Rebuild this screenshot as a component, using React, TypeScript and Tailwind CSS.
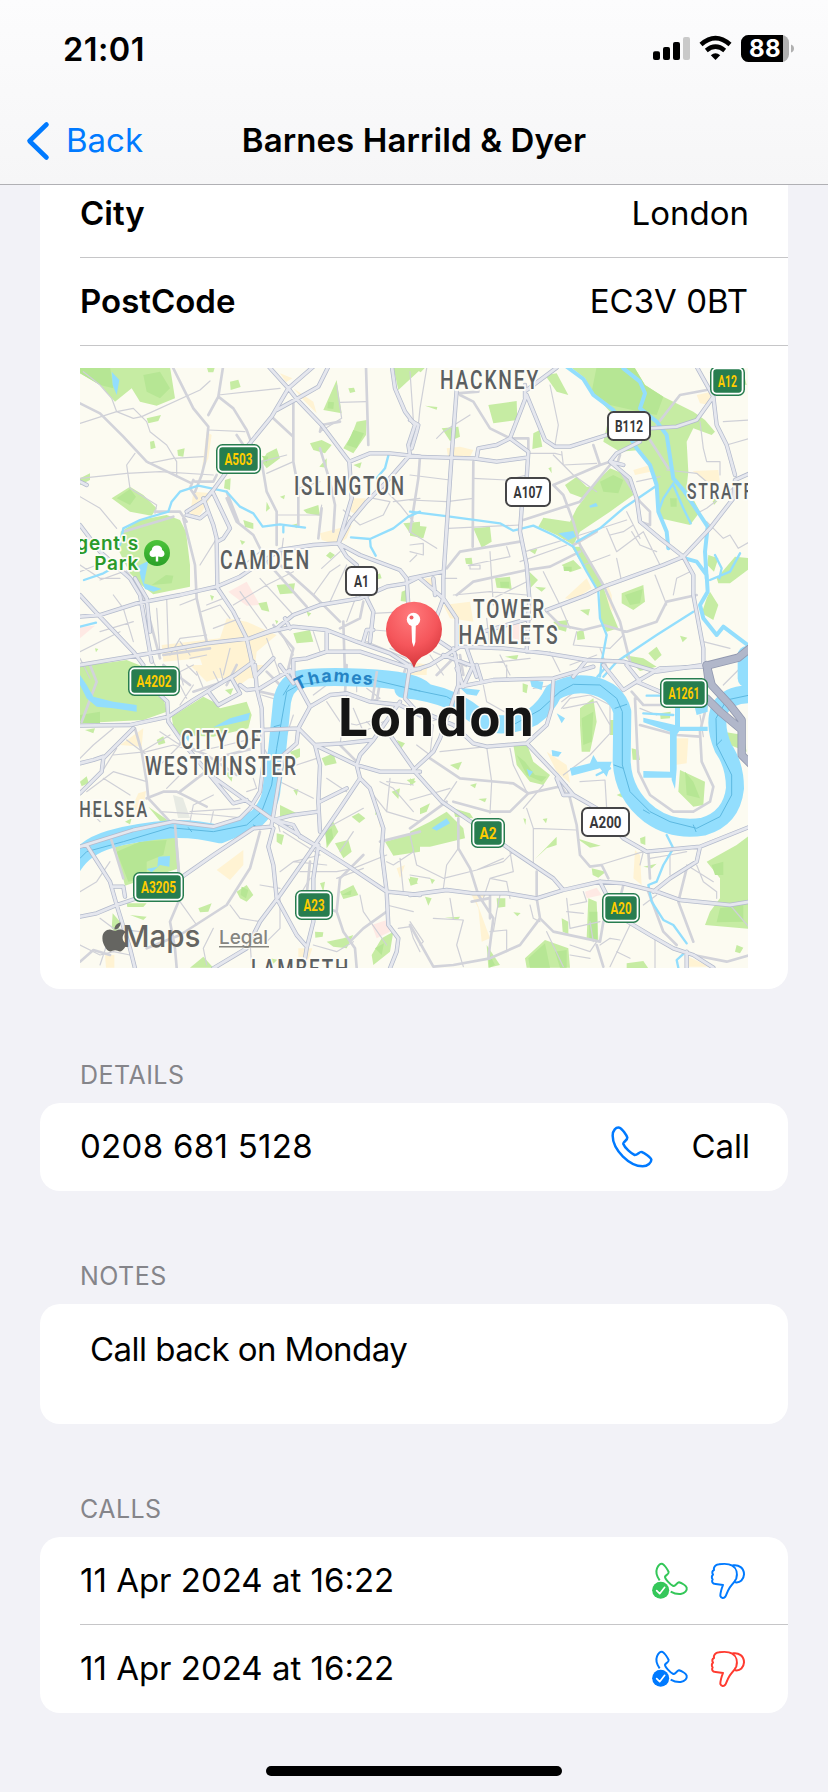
import { FaApple } from "react-icons/fa";

// Map geometry is stored per tile; every tile unit is a third of a pixel.
type Tiles = [string, string, string, string];

const TILE_ORIGINS = [
  "translate(80 365) scale(0.33333)",
  "translate(410 365) scale(0.33333)",
  "translate(80 665) scale(0.33333)",
  "translate(410 665) scale(0.33333)",
];

const builtUp: Tiles = [
  "M380 200L395 210L385 280L365 320ZM340 380L400 385L360 450L330 450ZM720 505L815 480L800 520L770 540L725 525ZM600 25L637 40L618 52ZM640 70L700 110L710 145L670 105ZM440 760L500 770L590 810L530 860L520 940L380 940L360 880L250 890L245 840L420 820ZM815 400L858 400L835 450L812 440Z",
  "M110 250L150 245L190 255L180 275L115 280ZM670 315L720 300L722 320L675 330ZM848 318L925 315L930 355L890 352ZM100 720L180 710L190 770L120 760ZM590 650L605 690L608 740L585 710ZM860 90L905 80L900 120L870 115ZM465 700L530 640L545 670L490 705ZM0 890L60 900L40 930L0 930ZM45 640L75 640L75 670L50 665Z",
  "M410 615L490 555L490 600L450 645ZM120 240L190 190L185 245ZM330 0H560L480 60L440 30L380 50ZM655 850H697L685 885H655ZM75 870H103V908H78ZM175 385L198 378L190 430L150 440ZM890 410L905 460L900 490ZM950 610L975 600L960 640Z",
  "M410 260L470 300L480 355L440 320ZM795 220L835 220L830 295L795 300ZM675 555L690 570L695 660L670 640ZM180 680L230 690L200 710L240 820L215 830L205 730ZM835 875L900 905H835ZM0 5H50V30H0Z",
];

const blush: Tiles = [
  "M445 680L500 650L540 720L500 722ZM0 785L45 782L0 820Z",
  "M310 780L330 775L328 825L308 820Z",
  "M875 780L920 765L930 800L890 820Z",
  "M525 680L560 668L575 690L530 700Z",
];

const park: Tiles = [
  "M0 5H270L285 100L230 122L180 110L155 70L105 110L60 60L0 25ZM450 50L475 44L482 66L452 75ZM770 45L785 145L730 135L750 90ZM830 170L860 165L858 210L820 265L790 250L815 210ZM940 5H1020V15L955 75ZM200 160L243 150L235 168L205 175ZM210 230L222 227L227 248L212 253ZM292 255L314 250L310 275L294 272ZM560 265L590 250L600 280L560 310L545 290ZM690 235L725 225L755 240L735 265L700 255ZM718 305L740 280V308ZM95 400L150 365L190 390L230 430L215 452L150 440ZM122 500L180 465L260 450L300 465L318 500L330 600L330 665L220 688L190 665L150 625L118 560ZM670 435L715 420L720 452L680 445ZM970 475L1020 470V520L990 505ZM490 465L520 475V492L495 486ZM590 660L645 655L640 685L600 688ZM535 715L560 710L568 740L545 735ZM640 805L690 795L700 830L650 835ZM0 905L140 885L190 905L200 945H0ZM380 5H405L400 22H385ZM805 70L822 68L826 80L810 84ZM965 680L978 675V710L962 708ZM750 560L765 570L752 582L738 572ZM390 690L402 694L396 708ZM480 525L496 530L486 540ZM635 480L655 475L650 490ZM0 340L30 325L30 345L0 360ZM600 395L615 390L612 403ZM435 345L452 340L450 375L432 370ZM560 410L570 430L558 440ZM880 635L900 625L905 640L885 645ZM585 765L595 768L590 778ZM680 740L694 745L685 755ZM45 850L55 852L48 862ZM820 300L845 292L840 310Z",
  "M480 5H672L705 60L760 95L850 140L885 165L915 200L905 210L850 190L830 230L835 320L830 365L870 440L840 480L750 460L745 380L725 300L690 255L630 260L580 230L600 140L545 80L525 40ZM405 30L440 25L475 90L440 80ZM235 120L320 108L322 165L250 175ZM600 310L650 330L670 390L600 440L510 500L490 540L440 510L385 485L400 458L480 470L500 430L560 350ZM465 360L500 335L530 365L555 370L520 400L480 385ZM190 490L240 485L245 530L215 548ZM0 480L50 485L40 520L0 512ZM255 640L300 635L305 672L260 668ZM635 685L700 660L705 710L670 735L635 715ZM485 545L515 545L560 620L585 680L600 730L625 790L590 800L570 760L570 680L530 620ZM455 600L490 585L515 610L480 622ZM900 680L925 720L910 765L875 745L890 700ZM920 640L975 575L1020 580V610L960 655L925 655ZM370 205L388 196L397 245L367 252ZM95 190L145 185L150 215L120 228ZM5 5H48L32 22ZM895 570L925 580L912 620L892 600ZM358 620L384 645L362 668ZM640 870L700 880L740 905L690 918ZM500 800L520 795L525 822L502 825ZM715 865L740 845L755 870L735 888ZM45 122L82 126L80 134ZM375 665L408 668L395 680ZM510 735L540 732L535 752ZM430 770L475 765L468 800L440 792ZM810 812L832 818L818 832ZM905 400L925 405L912 420ZM415 310L424 306L425 325ZM355 555L382 552L375 568ZM285 875L325 870L320 885ZM165 580L185 578L188 600L168 596ZM290 342L345 335L340 355ZM965 10L1000 20L1010 60L975 55Z",
  "M0 -5H150L155 85L250 95L260 140L190 165L0 175ZM275 155L370 95L400 110L420 130L500 110L515 150L505 190L400 215L300 210L280 185ZM105 545L285 510L298 610L170 650L135 662ZM600 420L650 445L600 458ZM725 280L760 265L770 295L735 302ZM735 490L760 470L775 500L740 550ZM765 535L805 525L815 560L790 580ZM915 530L1020 500V560L940 572ZM470 680L500 660L520 690L500 710L480 700ZM780 680L820 660L835 690L790 702ZM330 908L370 875L400 908ZM590 505L612 510L605 540L590 530ZM875 870L905 820L940 800L930 860L880 900ZM205 425L270 470L240 468ZM230 225L250 214L256 234L236 240ZM740 830L790 820L820 810L800 850L760 845ZM98 745L120 770L115 810L95 790ZM140 715H200L190 726H142ZM630 260L660 250V275L640 285ZM935 380L960 370L955 402ZM0 350L20 334L26 354L5 364ZM815 455L836 444L856 460L838 474ZM950 225L975 235L964 250ZM985 640L1015 655L992 662ZM355 730L395 715L385 740L360 742ZM570 880L592 884L580 896ZM705 800L730 802L728 815L706 818ZM720 655L735 650L730 680ZM15 195L45 190L40 205ZM435 75L460 70L452 90ZM980 345L1005 340L998 360ZM135 470L155 460L150 478ZM640 375L655 372L650 392ZM435 325L460 318L455 350ZM150 750L200 755L190 765ZM890 430L895 445L885 450Z",
  "M310 240L350 235L370 290L420 330L400 360L360 350L320 300ZM510 130L550 100L560 170L540 260L515 260L510 180ZM0 500L60 470L110 440L160 490L165 520L60 545H0ZM810 315L885 350L880 420L850 425L805 380ZM890 590L980 540L1020 510V792L885 780L900 740L930 700V640ZM345 880L405 825L475 850L480 908H350ZM535 700L560 710L565 830L530 820ZM230 840L270 900L235 908ZM650 895L700 888L715 910H650ZM375 582L440 515V540L410 550ZM120 300L156 290L145 315ZM665 250L685 255L690 285L668 284ZM690 520L706 514V540L692 535ZM545 610L588 620L565 638L548 630ZM260 700H286V725L262 728ZM620 390L642 380L638 398ZM500 520L572 542L540 548ZM130 430L180 445L190 460L135 455ZM30 430L60 415L50 440L30 448ZM338 55L354 60L350 85L338 80ZM340 460L348 462L346 480ZM398 462L412 460L408 475ZM205 402L230 400L225 412ZM0 340L18 350L0 362ZM0 635L25 640L20 655L0 655ZM45 695L65 700L55 722ZM105 758L150 755L145 763ZM310 742L332 744L322 754ZM980 840L1000 848L990 865L975 860ZM700 605L740 596L725 610ZM750 145L782 140L780 160L752 162ZM60 640L75 645L66 658ZM455 760L475 770V808L458 800ZM940 200L1000 210L1010 260L960 240ZM600 165H620V210H600ZM180 360L200 355L195 370Z",
];

const parkDeep: Tiles = [
  "M0 5H90L100 70L60 60L0 25ZM190 30L240 20L270 70L240 100L200 80ZM110 400L150 372L168 395L150 420ZM820 195L852 205L830 250L800 240ZM745 110L762 112L760 132L742 130ZM258 630L280 632L275 655L215 660ZM545 272L565 275L560 295Z",
  "M560 5H672L705 60L760 95L740 150L690 140L600 120L545 80ZM570 350L610 330L640 345L625 385L580 380ZM645 690L698 672L690 715L660 720ZM270 650H298V668H272ZM780 400L800 400V425H782ZM460 605H485V618H462Z",
  "M110 560L180 530L260 525L250 570L200 590L200 640L145 650ZM735 500L755 490L760 520L742 540ZM485 665L505 675L498 700L482 690ZM0 150L60 140L60 175H0ZM785 690L815 675L812 690ZM885 850L912 835L905 870Z",
  "M320 270L345 290L375 330L410 335L395 350L350 330ZM515 160L550 140L545 230L520 240ZM825 320L850 350L870 400L830 390ZM355 880L405 835L420 908H360ZM435 860L470 855V908H450ZM538 740H562V825H538ZM235 860L255 900L238 908ZM905 600L940 590L940 630L915 630ZM930 730L1000 720V770L920 772Z",
];

const lake: Tiles = [
  "M95 20L118 45L110 90L98 60ZM175 602L205 588L192 655L245 672L220 680L195 672L183 640Z",
  "M445 505L490 498L497 515L475 526ZM538 422L558 413L564 424L540 428Z",
  "M0 30L20 60L40 95L100 110L170 120V140L100 130L50 125L20 100L0 60ZM400 187L450 160L510 143L505 165L440 180ZM200 612L232 605L235 575L270 573L268 605L240 600L215 622ZM315 215L330 210L325 230Z",
  "M480 310L540 295L550 270L562 290L605 290L590 335L570 310L485 332ZM795 125H810V185H893V198H808L800 210V312L795 372L785 345V338H700V318L780 320V200L700 172V158L795 180ZM425 255L455 262L445 275L427 273ZM350 312L369 320L358 335ZM65 490L110 460L120 475L80 497ZM360 45L400 50L395 75L365 65ZM150 68L210 75L200 92L170 88ZM855 130L893 100V140L860 150ZM440 145L465 160L455 175ZM985 0H1020V25L1000 20Z",
];

const stream: Tiles = [
  "M120 540L130 490L180 465L265 440L275 410L300 380L355 362L440 380L480 425L520 445L548 485L600 478L675 488M610 480V502M813 517L870 522L940 490L985 455L1020 440M870 522L872 545L887 572M925 272L915 310L890 340M12 645L70 625L115 600M0 785L48 773",
  "M0 440L120 455L270 475L310 497L370 482L430 510L490 545L530 620L565 680L570 760L590 810L575 890L570 935M850 740L740 810L620 890L580 935M500 530L570 490L640 430L735 365M790 355L760 400L745 440M790 360L820 430L842 475M900 645L960 620L990 565M915 570L935 610L928 640",
  "M0 0",
  "M770 510L790 550L760 600L740 650L715 660L725 710L760 765L790 780L830 835M822 865L800 885L805 908M585 10L562 35M710 92H760M700 145L790 150M600 310L560 330",
];

const river: Tiles = [
  "M0 0",
  "M470 5L520 42L550 90L610 135L680 250L720 300L740 360L745 440L770 500L775 550M640 10L690 50L705 85L690 130L740 170L770 210L790 340L820 375L870 450L893 485L885 560L890 640M825 580L860 590L890 630L893 680L870 720L880 760L920 810L940 785L1020 845",
  "M0 0",
  "M0 0",
];

const thames: Tiles = [
  "M0 0",
  "M1010 870V940",
  "M-20 600Q15 545 90 523T280 492Q350 490 420 508Q490 480 530 460Q572 420 575 370L592 250L606 110Q615 60 650 45Q700 32 850 38T1030 75",
  "M-20 72Q60 80 120 105T220 172Q300 190 370 155Q410 125 430 82Q480 50 540 60Q620 75 637 140L635 290Q640 390 720 450Q790 500 880 485Q965 460 975 370Q975 300 940 250Q910 180 930 130Q955 85 1030 88",
];

const thamesLine: Tiles = [
  "M0 0",
  "M0 0",
  "M0 580L20 560L130 530L270 488L400 500L500 480L545 440L575 360L590 250L620 80L660 58L760 48M860 40L1020 78M335 500L325 488M520 480L540 490M610 90L628 60M582 185L600 180",
  "M0 72L110 95L160 125M300 185L390 135L450 80L490 58L570 60L620 100L637 140V300L660 380L720 440L780 470L860 490L930 455L965 390L965 330L920 240L918 160L950 105L1020 90M615 130L650 118M612 300L640 310M700 435L718 445M850 480L858 500M920 240L935 225",
];

const minor: Tiles = [
  "M0 175L110 140L160 160L185 155L360 75L390 48M10 20L60 60L95 100L110 140L160 130L200 170L210 200L260 240L290 290V335M415 90L600 70M385 195L495 200M780 112L858 110M770 60L785 160L720 200M0 340L140 325L240 320L400 330M205 295L280 280L370 275M165 265L140 300L150 370L230 420L225 445M0 395L60 430L110 490M560 325L640 290M545 290L620 270M590 450H720L725 420M655 370L720 350M790 435L840 480L910 450L930 410L880 400M600 600L610 520M725 610L780 560M700 690L750 620L780 600M800 600L750 710M900 360L960 420L1000 470M260 700L265 850M100 690L130 730L160 830M60 800L160 770M0 860L120 800M480 680L560 790M540 640L640 750M460 720L560 660L640 620M230 730L240 870M300 830L330 870M270 870L300 820L380 810M380 720L430 700M365 740L420 720L450 760M400 790L480 760M540 560L490 600M60 645L130 620M0 600L60 640L120 640M830 690L800 770M930 850L1000 880M860 830L980 880M880 840L1000 900M330 880L380 870M450 850L430 930M560 820L600 930M600 800L640 870M700 800L720 860M880 795L920 798M880 745L980 740M410 520L360 600M30 940L0 880M210 870L240 930M290 850L300 930M940 410L1020 400M0 620L50 600M350 700L300 720",
  "M0 330L120 345M0 405L110 410L190 400M190 340L290 345L350 330M115 490L330 480M50 10L30 130L25 180M420 60L445 180L435 240M345 560L510 510L650 465M455 260L460 300L490 330M460 300L560 295M590 490L620 560L700 500L750 600M650 440L690 520M620 580L635 650M770 315L860 325L890 350M870 170L880 250L890 290H930V330M735 630L770 720M790 690L800 640L840 620M400 620L450 720L480 790M680 350L750 335M890 470L940 520L960 510L985 550L1020 530M240 560L250 720M290 545L300 575L180 600M0 540L40 535V570L0 560M140 640H100M130 690L240 680L350 690M500 800L490 840L600 850L640 810M80 220L100 200L180 150M570 850L600 930M20 570L0 590M175 602L210 600V612H180V602M330 590L470 540M250 700L350 650M0 20L10 165M360 265L435 265L455 270M430 270L490 330L560 380M0 500L80 550M940 170L1020 165M950 240L1020 220M230 760L240 850M270 870L300 930M180 900L360 880M60 870L100 930M480 900L560 870M600 510L640 500L670 480M665 500L690 540L740 560M870 440L890 430L980 360M70 860L170 905M0 770L60 780M520 600L600 570M420 860L450 920M880 830L960 850",
  "M0 280L40 240L100 190M0 410L60 470M20 380L100 320L200 350M100 270L200 260M140 225L240 300L300 240L240 200M70 340L150 390M110 250L60 330M200 260L280 240L350 260L440 240L520 220M185 260L270 210M330 440L480 430M390 485L400 440M330 470L340 420L400 390M300 330L260 370M520 340L530 370L500 380M540 660L600 670M450 720L480 760L540 770M600 350L700 400M610 500L720 570M720 570L640 590L600 620M640 590L740 600M660 620L770 620L820 610L920 570M840 690L850 740L920 840M770 640L850 610M920 720L1000 740M955 790L990 785L1000 820L1020 860M820 500L780 560M740 490L850 430M880 390L920 440L1020 470M900 350L940 370L1000 440M920 440L930 340M740 340L800 380M650 300L710 280M700 840L770 860L820 830M400 790L370 850L380 900M510 830L515 900M300 710L350 780M60 760L100 790L180 800M80 840L60 900M0 680L50 650L90 590M0 840L60 870L100 860L150 870M240 440L400 450L500 460M530 210L580 300M545 90L610 110M740 110L780 170L830 180L900 160M800 90L780 240M640 150L610 240M860 170L900 210M820 130L850 200L950 150M700 90L740 60M310 60L300 20L340 0M300 120L340 60M320 100L300 60M350 20L370 70M400 20L420 60M420 10L430 50M320 0L350 30M960 580L970 680M1000 560L940 600L920 590M560 830L600 790L600 700M830 20L830 80M860 70L900 100L860 110M600 500L590 460M690 640L660 690M920 350L1000 360",
  "M90 260L230 245L245 350L240 445M455 130L480 100L540 90L600 120V205L540 270L460 330M350 430L370 490V600M370 490L500 495M300 560L310 620L240 640L220 700M510 350L585 345L590 430M0 510L20 600L100 640L200 615L280 580M570 600L700 560M240 800L290 795V860M470 700L480 790L570 770M470 740L520 745M70 760L160 765L140 840L160 905M735 820V908M660 780L600 905M860 600L880 650L920 680V700M960 720L1020 790M410 800L460 905M480 840L540 860L560 830M140 350L100 410M0 405L120 370M300 250L310 300L350 380M400 360L340 430M60 640L0 630M145 550L110 600L100 670M200 615L280 590L310 560M270 690L260 740L250 800M360 720L370 760L390 770M700 720L740 690M720 580L780 570L830 560M780 570V630M830 600L910 650M480 720L530 710L520 680M540 770L550 830M600 690L640 760M0 770L40 830L30 840M570 840L600 820L630 825M480 870L540 880M120 700L130 760M455 110L520 60M460 130L560 110L600 180M220 60L230 110L300 150M290 0L290 45M370 70L430 60M0 120L60 160M0 140L70 180M20 240L60 270L70 180M120 150L60 170M690 130L740 150M870 150L880 215M620 860L660 880M700 560L690 600M300 700L290 650L240 640M940 60L1000 0",
];

const secondary: Tiles = [
  "M275 0L340 130L385 185L375 290L365 330L345 380M430 0L415 95L385 150M415 95L460 130L500 195L515 235M0 115L60 145L130 215L200 290L335 355M858 5L865 240M640 115V290L655 370V485M575 155L640 215M720 250L750 350L765 420L760 500M545 290L560 380L590 440V540M725 430L715 520M470 210L490 240M310 460L345 600L350 700L380 830M225 440H300L320 470M440 400L470 470L520 510L560 590L680 725M600 600L700 690L780 770M790 770L795 935M440 380L475 470M580 780L640 850L620 930M345 350L400 350L410 330M130 500L280 455M340 345L330 370L350 400M720 200L725 180L780 170M780 790L840 760L850 710M250 870L390 850M140 620L190 690L240 880",
  "M150 90L190 110L240 190L300 220H355V260M190 290L188 545M30 275L25 340L0 500M205 60V80L140 85M600 300L510 410L340 465M430 360L500 330L570 300L600 290M550 240L570 300M430 360L460 390L490 470L510 540L580 660L630 770L660 890M110 610L150 560L330 530M140 690L190 650L350 615L420 605L510 560M410 740L450 780L520 795L580 780L650 800L740 770L770 710L860 690M740 180L810 90L890 75M720 225L775 310M630 270L620 300L690 410M690 470L720 480L720 440L690 410M150 870L160 930M120 850L140 870L80 930M490 540L560 500",
  "M165 190L185 260L200 350L205 400L270 470M200 400L250 380H290L380 425M285 480L295 610L300 700L270 770L285 850L290 908M540 500L510 610L440 720L300 810L200 850M90 510L130 640M905 20L890 110M800 0L795 85M780 240L830 290M770 740L790 800L825 850L830 908M0 890L40 855L90 870M920 740L850 790L810 830M300 380L390 310L440 270L520 250M30 0L50 50L5 170M470 0L440 60M340 80L430 50M300 235L380 270L470 330M250 0L330 60M560 20L600 60M980 0L960 60M540 80L585 90L590 130M900 530L1020 500M690 590L680 690M770 740L720 720M850 570L780 640L770 740",
  "M675 100L685 320L720 390L790 440H850L900 410L910 365L875 290L870 200L890 120L700 120L665 80M60 280L150 340L310 355L355 385L300 440H240L130 410M355 385L470 360L500 480L510 570L540 605L575 600L595 640M145 460V550L180 610L205 690L250 760L235 880M380 620V700L390 760L430 800L570 830L580 770M715 680L760 800L800 840M830 610L805 710L850 830M715 560L720 640M560 840L580 905M0 780L70 905L130 900L240 880L330 840L390 760M850 870L950 890L1020 870M690 180L800 210L870 215M110 410L0 490M630 700L640 660M185 710L235 700M240 690L240 760M470 390L440 340",
];

const major: Tiles = [
  "M562 0L625 70L650 102L725 180L808 290L815 400L775 535M700 5L625 70L575 155L440 320L400 375L375 405L320 440M745 5L715 65L650 102L590 135M808 290L870 265H930L1020 275M935 0L945 70L975 140L1005 180L985 240L990 270L920 350L860 410L810 470L775 535M775 535L700 540L600 555L480 635L410 665L300 690L170 715L60 750L0 755M775 535L840 570L960 615L980 640L985 720M980 655L1020 635M980 655L920 665L840 700L720 720L640 750L590 790L510 820L380 835L180 870L0 900M320 450L360 460L385 440L400 480L410 520L412 665M370 400L385 440M400 385L450 490L430 520L412 530M0 480L60 560L150 640L180 690L215 890M0 690L60 755L160 860L190 900M410 665L460 740L500 820L525 935M510 820L570 800L640 785L740 795L830 830L930 865L1000 910M775 535L800 575L830 600M860 700L880 740L870 830M525 935L580 880M640 940V885L680 880L740 860H840L1000 912L1020 912M740 795V860M165 640L200 700L210 800M850 830L860 795L880 795M0 350L20 360M615 760L630 790",
  "M140 75L125 270L110 490L100 640V700M350 90L335 130L300 220M350 90L405 225L435 245H480L590 210M345 60V100M350 75L440 8M0 275L190 280L260 290L350 278M200 280L205 250L260 240L300 220L355 260L350 340L335 430L330 500L350 600L358 700L350 860M0 165L25 180L20 200L5 250M720 190L800 185L860 165L910 95M860 5L910 95L920 180L950 240L975 330M690 230L620 265L600 290L660 340L680 400L690 470L750 520L820 575M1020 325L975 345L970 400L900 490L820 575L760 600L580 665L530 690L410 735M820 575L850 630V690L880 850V900L740 920L640 890L530 885L410 865L280 850L150 845L60 900L0 920M0 640L100 620M30 640L100 700L140 760V850M70 640L75 690M100 700L60 810L120 850M170 850L200 935M130 850L150 935M220 800L360 760M600 290L640 300M490 935L530 885M100 870L180 900",
  "M0 182L150 180L265 155L340 105L430 50L465 30L520 -10M265 170L262 110L240 90M265 170L310 235L390 330L510 415L580 465L640 500L705 540M385 80L415 120L480 85L455 40M525 0L530 70L545 130L550 300L540 380L510 430L480 460L400 485L280 470L160 495L0 545M0 385L65 320L70 280L160 190M0 295L40 285L70 275M480 60L500 75L540 70L630 15L690 125L655 190L550 195M655 190L705 240L720 300L715 410L720 500M655 190L650 235L610 270L600 330L575 480M690 125L750 90L800 85L870 110L960 120L1020 150M705 240L790 235L880 225L960 110M705 240L830 300L900 320H1020M880 225L840 270L830 300L840 340L780 430L705 540L600 690L540 770L500 850L400 910M840 340L870 370L910 490L905 560L920 680L925 780L955 820L950 860L930 910M705 540L800 600L920 680L1020 690M720 410L800 370M715 440L640 450L580 465M575 485L520 490L400 570L300 640L200 690L110 720L50 745L0 755M20 540L90 650L110 720L150 850L165 910M580 490L565 545L580 600L590 700L650 810L680 845M715 540L700 640V770L680 850L670 910M100 665H130L135 695M990 0L975 100L1020 150M930 210L1000 310M580 465L640 480L660 515L705 540M385 325L460 415L500 405M640 55L600 0",
  "M145 5V60L90 220L70 260L10 315L95 410L190 475L310 560L430 640L460 675L380 700L290 685H190L110 675L0 690M460 675L570 650L640 655L740 680L810 705L960 720L1020 710M150 65L250 45L430 40L550 5M430 45L425 130L410 180L350 235L230 245L190 235L130 180L60 150L0 130M350 235L440 330L490 390L560 430L640 520L710 560L870 545L1020 485M870 545L860 590L780 640L730 680M440 340L460 390H490M570 650L620 750L720 810L790 850L850 870L910 908M830 860V908M580 0L640 75L680 50L750 10L880 5M680 50L750 80M650 0L690 50M200 0L215 50M140 10L160 65L190 0",
];

const motorway: Tiles = [
  "M0 0",
  "M1020 850L985 878L890 902L895 940",
  "M0 0",
  "M890 0L905 60L960 120L995 165V270L1025 300M890 100L930 140L990 190",
];

function Layer({ tiles, ...rest }: { tiles: Tiles } & React.SVGProps<SVGGElement>) {
  return (
    <g {...rest}>
      {tiles.map((d, i) => (
        <path key={i} d={d} transform={TILE_ORIGINS[i]} />
      ))}
    </g>
  );
}

const line = { fill: "none", strokeLinejoin: "round", strokeLinecap: "round" } as const;

type PlaceProps = { x: number; y: number; w: number; size?: number; children: string };

function Place({ x, y, w, size = 25, children }: PlaceProps) {
  return (
    <text
      x={x}
      y={y}
      textLength={w}
      lengthAdjust="spacingAndGlyphs"
      fontSize={size}
      letterSpacing={2.4}
      fill="#5b5f61"
      stroke="#fdfcf6"
      strokeWidth={4}
      strokeLinejoin="round"
      paintOrder="stroke"
      className="font-['Roboto',sans-serif] font-medium"
    >
      {children}
    </text>
  );
}

type ShieldProps = { cx: number; cy: number; w: number; tw: number; label: string; green?: boolean };

function Shield({ cx, cy, w, tw, label, green }: ShieldProps) {
  return (
    <g>
      {green ? (
        <>
          <rect x={cx - w / 2} y={cy - 15} width={w} height={30} rx={6.5} fill="#277d4f" />
          <rect x={cx - w / 2 + 2.4} y={cy - 12.6} width={w - 4.8} height={25.2} rx={4} fill="none" stroke="#fff" strokeWidth={1.8} />
        </>
      ) : (
        <rect x={cx - w / 2 + 1} y={cy - 14} width={w - 2} height={28} rx={5.5} fill="#fff" stroke="#454547" strokeWidth={2} />
      )}
      <text
        x={cx - tw / 2}
        y={cy + 5.7}
        textLength={tw}
        lengthAdjust="spacingAndGlyphs"
        fontSize={16}
        fill={green ? "#ffcc00" : "#38383a"}
        className="font-['Roboto',sans-serif] font-bold"
      >
        {label}
      </text>
    </g>
  );
}

function CityMap() {
  return (
    <svg viewBox="80 368 668 600" className="h-[600px] w-[668px] overflow-hidden">
      <defs>
        <radialGradient id="pin" cx="0.45" cy="0.2" r="0.85">
          <stop offset="0" stopColor="#ff7a7c" />
          <stop offset="0.55" stopColor="#f5565b" />
          <stop offset="1" stopColor="#cf3136" />
        </radialGradient>
        <linearGradient id="tree" x1="0" y1="0" x2="0" y2="1">
          <stop offset="0" stopColor="#4cc43a" />
          <stop offset="1" stopColor="#2ba028" />
        </linearGradient>
        <path id="bend" d="M298 691Q318 679 345 682.5T375 684" />
      </defs>
      <rect x="80" y="368" width="668" height="600" fill="#fcfbf1" />
      <Layer tiles={builtUp} fill="#fff3d3" />
      <Layer tiles={blush} fill="#fee9e4" />
      <Layer tiles={park} fill="#c6eca3" />
      <Layer tiles={parkDeep} fill="#b6e694" />
      <path d="M173 795L183 798L190 818H178Z" fill="#e7eae3" />
      <Layer tiles={minor} {...line} stroke="#cfd0d7" strokeWidth={3.6} />
      <Layer tiles={secondary} {...line} stroke="#d2d3da" strokeWidth={8} />
      <Layer tiles={stream} {...line} stroke="#93defd" strokeWidth={7} />
      <Layer tiles={river} {...line} stroke="#93defd" strokeWidth={12} />
      <Layer tiles={lake} fill="#93defd" />
      <Layer tiles={thames} {...line} stroke="#93defd" strokeWidth={54} />
      <Layer tiles={thamesLine} {...line} stroke="#5cb8e0" strokeWidth={3} />
      <path d="M175 824.5L179 872M110 836L115 851M377 671L372 702M459 680L458 708" fill="none" stroke="#d2d3da" strokeWidth={2.6} />
      <Layer tiles={major} {...line} stroke="#b3bacc" strokeWidth={13} />
      <Layer tiles={major} {...line} stroke="#e5e7ee" strokeWidth={8.5} />
      <Layer tiles={motorway} {...line} stroke="#9299b0" strokeWidth={25} />
      <Layer tiles={motorway} {...line} stroke="#b1b7ca" strokeWidth={20} />

      <Place x={440} y={389} w={100}>HACKNEY</Place>
      <Place x={294} y={494.5} w={112}>ISLINGTON</Place>
      <Place x={220} y={569} w={91}>CAMDEN</Place>
      <Place x={473} y={618} w={73}>TOWER</Place>
      <Place x={458.5} y={644} w={101}>HAMLETS</Place>
      <Place x={181} y={748.5} w={82}>CITY OF</Place>
      <Place x={145} y={775} w={153}>WESTMINSTER</Place>
      <Place x={687} y={499} w={103} size={22}>STRATFORD</Place>
      <Place x={67} y={817} w={82} size={22}>CHELSEA</Place>
      <Place x={251} y={978} w={99}>LAMBETH</Place>

      <g fill="#2a9a2a" stroke="#fdfcf6" strokeWidth={3.5} paintOrder="stroke" strokeLinejoin="round" fontSize={19} letterSpacing={0.8} textAnchor="end" className="font-['Inter',sans-serif] font-semibold">
        <text x={139} y={549.5}>Regent's</text>
        <text x={139} y={570}>Park</text>
      </g>
      <circle cx={157} cy={553} r={13} fill="url(#tree)" />
      <path d="M155.800 561.500V556.500Q149.500 558 149.500 553.500Q149.500 551 151.800 550Q152 545.500 157 545.500Q162 545.500 162.200 550Q164.500 551 164.500 553.500Q164.500 558 158.200 556.500V561.500Z" fill="#fff" />

      <text fontSize={17.500} letterSpacing={1.400} fill="#2583c4" className="font-['Inter',sans-serif] font-bold">
        <textPath href="#bend">Thames</textPath>
      </text>

      <Shield green cx={238.500} cy={459} w={45} tw={28} label="A503" />
      <Shield green cx={154} cy={681} w={52} tw={35} label="A4202" />
      <Shield green cx={158.500} cy={887} w={51} tw={35} label="A3205" />
      <Shield green cx={314} cy={905} w={38} tw={21} label="A23" />
      <Shield green cx={727.500} cy={381} w={35} tw={19} label="A12" />
      <Shield green cx={488} cy={833} w={34} tw={17} label="A2" />
      <Shield green cx={621} cy={908} w={38} tw={21} label="A20" />
      <Shield green cx={684} cy={693} w={48} tw={31} label="A1261" />
      <Shield cx={361.500} cy={581} w={33} tw={15} label="A1" />
      <Shield cx={528} cy={492} w={46} tw={29} label="A107" />
      <Shield cx={629} cy={426} w={44} tw={28} label="B112" />
      <Shield cx={605.500} cy={822} w={49} tw={32} label="A200" />

      <text
        x={338}
        y={736}
        textLength={198}
        lengthAdjust="spacingAndGlyphs"
        fontSize={53}
        letterSpacing={2.500}
        fill="#151515"
        stroke="#fdfcf6"
        strokeWidth={3}
        strokeLinejoin="round"
        paintOrder="stroke"
        className="font-['Roboto',sans-serif] font-bold"
      >
        London
      </text>

      <path d="M414 668Q411 658 401 654.500A28 28 0 1 1 427 654.500Q417 658 414 668Z" fill="url(#pin)" />
      <circle cx={413.500} cy={619.500} r={6.700} fill="#fff" />
      <circle cx={411.500} cy={617.500} r={2} fill="#f25e62" />
      <path d="M411.500 625H415.800L415.400 642L413.800 647L412 642Z" fill="#fff" />

      <FaApple x={98} y={920.500} width={25} height={25} color="#656561" />
      <g fill="#656561" className="font-['Inter',sans-serif]">
        <text x={122.500} y={947} fontSize={30.500} textLength={78} lengthAdjust="spacingAndGlyphs" className="font-medium">Maps</text>
        <text x={219} y={944} fontSize={18.500} textLength={49} lengthAdjust="spacingAndGlyphs" fill="#858580" stroke="#fdfcf6" strokeWidth={2} paintOrder="stroke" className="font-medium">Legal</text>
      </g>
      <path d="M219 946.800H269" stroke="#858580" strokeWidth={1.600} />
    </svg>
  );
}

function PhoneIcon() {
  return (
    <svg viewBox="86 74 132 132" className="h-11 w-11" fill="none" stroke="#007aff" strokeWidth={7.5} strokeLinejoin="round">
      <path d="M114 82C104 80 94 90 94 106C94 126 107 150 125 169C143 187 166 198 184 198C200 198 210 186 210 178C209 171 188 157 181 155C176 152 168 165 160 164C150 160 130 142 126 131C124 125 139 119 138 112C136 105 122 84 114 82Z" />
    </svg>
  );
}

function CallDoneIcon({ className }: { className: string }) {
  return (
    <svg viewBox="93 60 114 120" className={"h-10 w-[38px] " + className}>
      <path
        d="M119 118C109 104 107 92 111 82C115 72 122 66 128 69C134 73 142 85 146 93C147 99 137 103 135 107C134 113 151 131 160 135C165 136 170 126 177 124C184 126 197 133 200 140C202 148 195 157 182 159C171 160 161 157 152 152"
        fill="none"
        stroke="currentColor"
        strokeWidth={6}
        strokeLinejoin="round"
      />
      <circle cx={122} cy={148} r={25.500} fill="currentColor" />
      <path d="M110 149L119 158L134 139" fill="none" stroke="#fff" strokeWidth={5} strokeLinecap="round" strokeLinejoin="round" />
    </svg>
  );
}

function ThumbsDownIcon({ className }: { className: string }) {
  return (
    <svg viewBox="270 66 108 120" className={"h-10 w-9 " + className} fill="none" stroke="currentColor" strokeWidth={6} strokeLinejoin="round" strokeLinecap="round">
      <path d="M297 76C310 74 327 74 337 80C350 88 353 104 349 118C344 130 334 138 328 148C322 158 320 165 316 173C312 179 303 178 301 171C301 160 305 148 309 138L287 135C277 134 274 128 278 121C274 117 275 110 279 107C275 101 277 95 282 93C280 85 285 77 297 76Z" />
      <path d="M340 79C356 77 372 86 372 106C371 122 361 132 346 130" />
    </svg>
  );
}

function StatusIcons() {
  return (
    <svg viewBox="0 0 142 28" className="h-7 w-[142px]">
      <rect x="0" y="16.300" width="7" height="8.700" rx="2" />
      <rect x="10" y="12" width="7" height="13" rx="2" />
      <rect x="20" y="7" width="7" height="18" rx="2" />
      <rect x="30" y="2" width="7" height="23" rx="2" fill="#c9c9c9" />
      <path d="M62.500 25L57.800 20.300Q62.500 16.300 67.200 20.300Z" />
      <path d="M53.300 15.500Q62.500 7.800 71.700 15.500" fill="none" stroke="#000" strokeWidth="4.400" />
      <path d="M48 9.500Q62.500 -3.200 77 9.500" fill="none" stroke="#000" strokeWidth="4.600" />
      <rect x="88" y="0" width="48" height="27" rx="7.500" fill="#b0b0b0" />
      <path d="M95.500 0H130V27H95.500A7.500 7.500 0 0 1 88 19.500V7.500A7.500 7.500 0 0 1 95.500 0Z" />
      <path d="M138 9.500Q141 10.500 141 13.500T138 17.500Z" fill="#b0b0b0" />
      <text x="96" y="22" fontSize="24" fill="#fff" textLength="31.500" className="font-['Inter',sans-serif] font-bold">88</text>
    </svg>
  );
}

function Card({ className = "", children }: { className?: string; children: React.ReactNode }) {
  return <section className={"overflow-hidden rounded-[20px] bg-white pl-10 " + className}>{children}</section>;
}

function SectionTitle({ children }: { children: string }) {
  return <h2 className="pl-10 text-[25px] leading-8 tracking-[0.45px] text-[#85858a]">{children}</h2>;
}

function CallRow({ phone, thumb, last }: { phone: string; thumb: string; last?: boolean }) {
  return (
    <div className={"flex h-22 items-center pr-[42px] " + (last ? "" : "border-b border-[#c6c6c8]")}>
      <span className="flex-1">11 Apr 2024 at 16:22</span>
      <CallDoneIcon className={phone} />
      <ThumbsDownIcon className={"ml-[21px] " + thumb} />
    </div>
  );
}

export default function App() {
  return (
    <div className="flex h-[1792px] w-[828px] flex-col overflow-hidden bg-[#f2f2f7] font-['Inter',sans-serif] text-[33px] text-black">
      <header className="flex h-[185px] shrink-0 flex-col border-b border-[#b0b0b4] bg-gradient-to-b from-[#fcfcfd] to-[#f6f6f7]">
        <div className="flex h-[98px] items-center justify-between pr-[33px] pl-[63px]">
          <span className="pt-0.5 text-[32.500px] font-semibold tracking-[0.5px]">21:01</span>
          <StatusIcons />
        </div>
        <nav className="grid h-[86px] grid-cols-[220px_1fr_220px] items-center">
          <a className="flex items-center pl-[26px] text-[#007aff]">
            <svg viewBox="0 0 24 40" className="h-10 w-6" fill="none" stroke="currentColor" strokeWidth="4.600" strokeLinecap="round" strokeLinejoin="round">
              <path d="M20.500 3.500L3.500 20L20.500 36.500" />
            </svg>
            <span className="pl-4">Back</span>
          </a>
          <h1 className="text-center font-semibold tracking-[0.1px]">Barnes Harrild &amp; Dyer</h1>
        </nav>
      </header>

      <main className="flex flex-col px-10">
        <Card className="rounded-t-none">
          <div className="flex h-[73px] items-center justify-between border-b border-[#c6c6c8] pr-[39px] pb-[14px]">
            <span className="font-semibold">City</span>
            <span>London</span>
          </div>
          <div className="flex h-22 items-center justify-between border-b border-[#c6c6c8] pr-10">
            <span className="font-semibold">PostCode</span>
            <span>EC3V 0BT</span>
          </div>
          <div className="h-[643px] pt-[22px]">
            <CityMap />
          </div>
        </Card>

        <div className="pt-[70px] pb-3">
          <SectionTitle>DETAILS</SectionTitle>
        </div>
        <Card className="flex h-22 items-center pr-[38px]">
          <span className="flex-1 tracking-[0.3px]">0208 681 5128</span>
          <PhoneIcon />
          <span className="pl-[37px]">Call</span>
        </Card>

        <div className="pt-[69px] pb-3">
          <SectionTitle>NOTES</SectionTitle>
        </div>
        <Card className="h-[120px] pt-[21px]">
          <p className="pl-2.5 leading-12 tracking-[-0.550px]">Call back on Monday</p>
        </Card>

        <div className="pt-[69px] pb-3">
          <SectionTitle>CALLS</SectionTitle>
        </div>
        <Card>
          <CallRow phone="text-[#34c759]" thumb="text-[#007aff]" />
          <CallRow phone="text-[#007aff]" thumb="text-[#ff3b30]" last />
        </Card>
      </main>

      <div className="mt-[53px] h-2.5 w-[296px] self-center rounded-full bg-black" />
    </div>
  );
}
